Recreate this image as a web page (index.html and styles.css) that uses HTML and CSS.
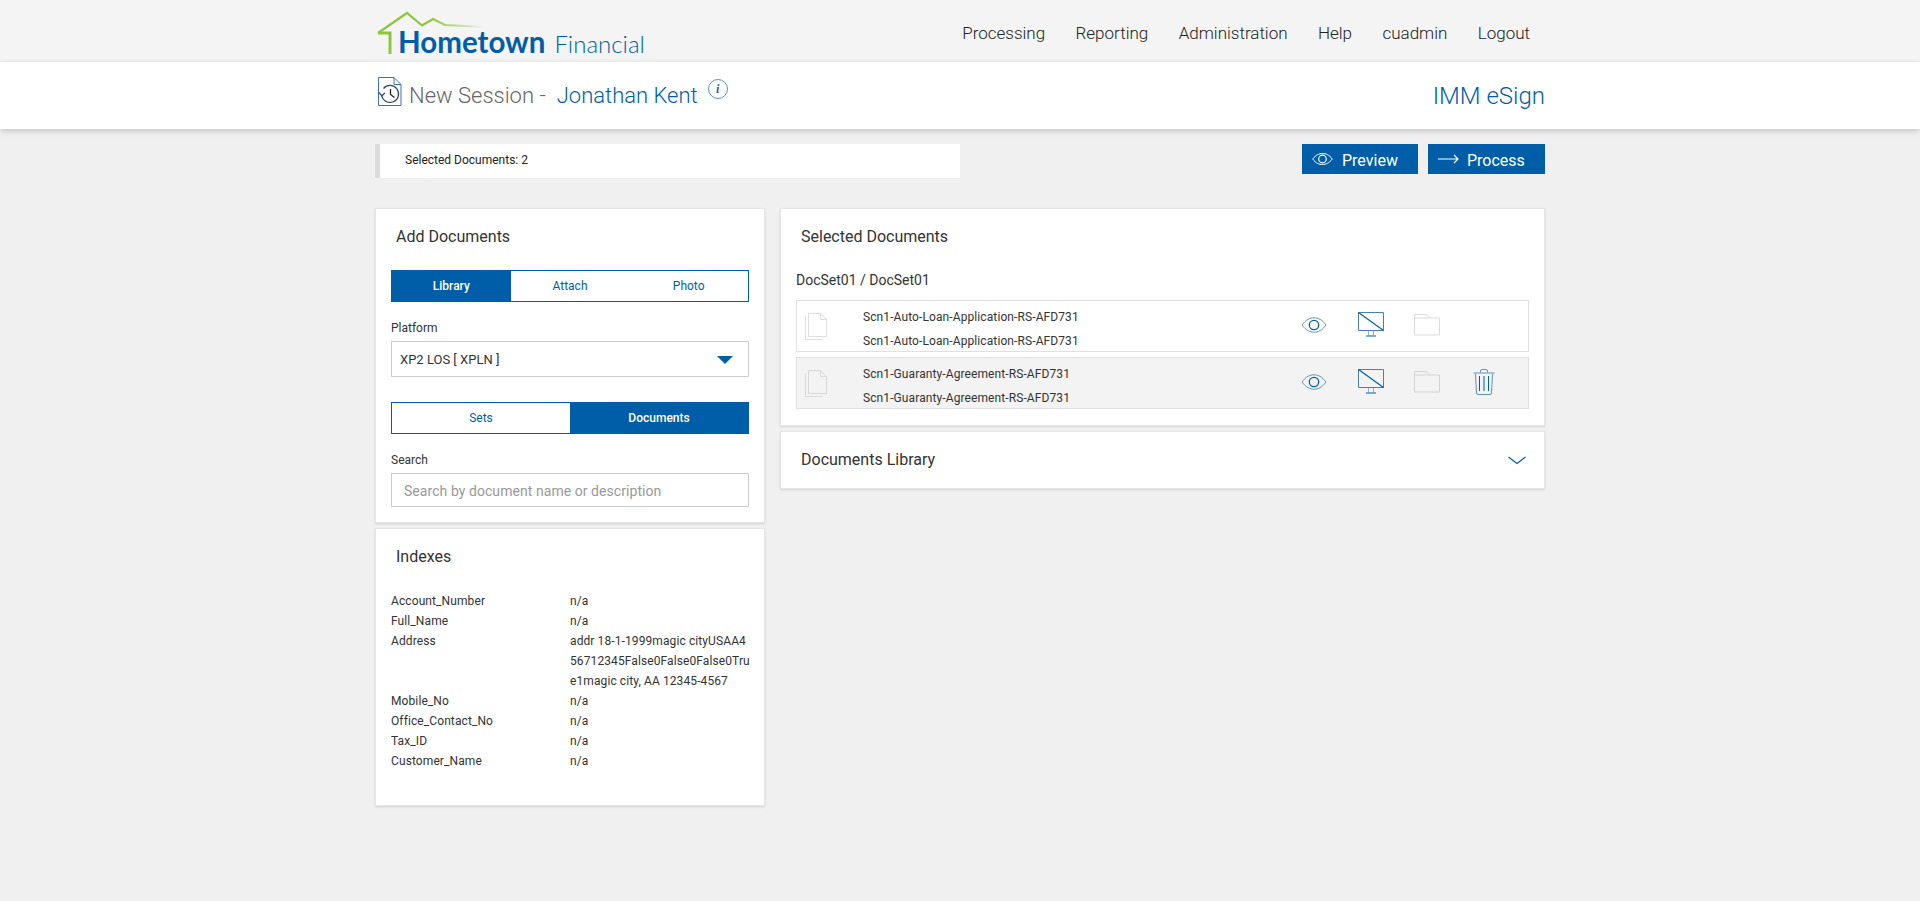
FILE: index.html
```html
<!DOCTYPE html>
<html lang="en">
<head>
<meta charset="utf-8">
<title>IMM eSign</title>
<link rel="stylesheet" href="styles.css">
</head>
<body>
<header class="topbar">
  <div class="wrap topbar-in">
    <a class="logo">
      <svg class="logo-roof" width="120" height="44" viewBox="0 0 120 44">
        <defs><linearGradient id="roofFade" x1="0" x2="1" y1="0" y2="0"><stop offset="0.5" stop-color="#8cc63f"/><stop offset="1" stop-color="#8cc63f" stop-opacity="0"/></linearGradient></defs>
        <path d="M1 22 L30 2 L45 14.500 L56 8 L68 14 L108 16" fill="none" stroke="url(#roofFade)" stroke-width="2.200"/>
        <path d="M1 22 H13 V43" fill="none" stroke="#8cc63f" stroke-width="3"/>
      </svg>
      <span class="logo-home">Hometown</span><span class="logo-fin">Financial</span>
    </a>
    <nav class="nav">
      <a>Processing</a><a>Reporting</a><a>Administration</a><a>Help</a><a>cuadmin</a><a>Logout</a>
    </nav>
  </div>
</header>

<section class="subhead">
  <div class="wrap subhead-in">
    <div class="session">
      <svg class="session-icon" width="24" height="30" viewBox="0 0 24 30" fill="none" stroke="#3f6fb5">
        <path d="M0.500 0.500 H16 L23 7.500 V28.500 H0.500 Z M16 0.500 V7.500 H23"/>
        <path d="M5.500 11.500 A8.500 8.500 0 1 1 3.700 18.500" stroke="#2b4a66" stroke-width="1.200"/>
        <path d="M1 15.500 L3.800 18.800 L7 16" stroke="#2b4a66" stroke-width="1.200"/>
        <path d="M12.500 12 V17.500 L16.500 20.500" stroke="#222" stroke-width="1.300"/>
      </svg>
      <span class="session-label">New Session -</span>
      <span class="session-name">Jonathan Kent</span>
      <span class="info">i</span>
    </div>
    <div class="product">IMM eSign</div>
  </div>
</section>

<main class="wrap">
  <div class="actions">
    <div class="notice">Selected Documents: 2</div>
    <div class="buttons">
      <button class="btn btn-preview">
        <svg width="21" height="12" viewBox="0 0 21 12" fill="none" stroke="#fff"><path d="M0.700 6 C4 1.800 7 0.500 10.500 0.500 C14 0.500 17 1.800 20.300 6 C17 10.200 14 11.500 10.500 11.500 C7 11.500 4 10.200 0.700 6 Z"/><circle cx="10.500" cy="6" r="3.800" stroke-width="1.200"/></svg>
        <span>Preview</span>
      </button>
      <button class="btn btn-process">
        <svg width="21" height="10" viewBox="0 0 21 10" fill="none" stroke="#fff" stroke-width="1.200"><path d="M0 5 H20 M16 1 L20 5 L16 9"/></svg>
        <span>Process</span>
      </button>
    </div>
  </div>

  <div class="columns">
    <div class="col">
      <section class="panel panel-add">
        <h2 class="panel-title">Add Documents</h2>
        <div class="seg seg-three">
          <span class="seg-item is-on">Library</span><span class="seg-item">Attach</span><span class="seg-item">Photo</span>
        </div>
        <label class="field-label">Platform</label>
        <div class="select">XP2 LOS [ XPLN ]<span class="caret"></span></div>
        <div class="seg seg-two">
          <span class="seg-item">Sets</span><span class="seg-item is-on">Documents</span>
        </div>
        <label class="field-label">Search</label>
        <input class="search" type="text" placeholder="Search by document name or description">
      </section>

      <section class="panel panel-index">
        <h2 class="panel-title">Indexes</h2>
        <dl class="index-list">
          <dt>Account_Number</dt><dd>n/a</dd>
          <dt>Full_Name</dt><dd>n/a</dd>
          <dt>Address</dt><dd>addr 18-1-1999magic cityUSAA456712345False0False0False0True1magic city, AA 12345-4567</dd>
          <dt>Mobile_No</dt><dd>n/a</dd>
          <dt>Office_Contact_No</dt><dd>n/a</dd>
          <dt>Tax_ID</dt><dd>n/a</dd>
          <dt>Customer_Name</dt><dd>n/a</dd>
        </dl>
      </section>
    </div>

    <div class="col">
      <section class="panel panel-selected">
        <h2 class="panel-title">Selected Documents</h2>
        <div class="docset">DocSet01 / DocSet01</div>
        <div class="doc">
          <svg class="doc-icon" width="22" height="27" viewBox="0 0 22 27" fill="none" stroke="#dedede"><path d="M0.500 3.500 V26.500 H17.500"/><path d="M3.500 0.500 H15.500 L21.500 6.500 V23.500 H3.500 Z M15.500 0.500 V6.500 H21.500"/></svg>
          <div class="doc-text"><div>Scn1-Auto-Loan-Application-RS-AFD731</div><div>Scn1-Auto-Loan-Application-RS-AFD731</div></div>
          <div class="doc-actions">
            <svg class="ico-eye" width="26" height="16" viewBox="0 0 26 16" fill="none" stroke="#005ea8"><path d="M1 8 C5 2.500 9 0.800 13 0.800 C17 0.800 21 2.500 25 8 C21 13.500 17 15.200 13 15.200 C9 15.200 5 13.500 1 8 Z" stroke="#5c93bf"/><circle cx="13" cy="8" r="4.700" stroke-width="1.300"/></svg>
            <svg class="ico-mon" width="26" height="25" viewBox="0 0 26 25" fill="none"><path d="M0.500 0.500 H25.500 V18.500 H0.500 Z" stroke="#4a7fb5"/><path d="M0.500 0.500 L25.500 18.500" stroke="#005ea8" stroke-width="1.200"/><path d="M10.500 19 V23.500 M15.500 19 V23.500" stroke="#9ab3bf"/><path d="M8 24 H18" stroke="#005ea8"/></svg>
            <svg class="ico-folder" width="26" height="22" viewBox="0 0 26 22" fill="none" stroke="#dcdcdc"><path d="M0.500 21 V0.500 H12 L16 4 H25.500 V21 Z M0.500 4 H16"/></svg>
          </div>
        </div>
        <div class="doc doc-alt">
          <svg class="doc-icon" width="22" height="27" viewBox="0 0 22 27" fill="none" stroke="#d8d8d8"><path d="M0.500 3.500 V26.500 H17.500"/><path d="M3.500 0.500 H15.500 L21.500 6.500 V23.500 H3.500 Z M15.500 0.500 V6.500 H21.500"/></svg>
          <div class="doc-text"><div>Scn1-Guaranty-Agreement-RS-AFD731</div><div>Scn1-Guaranty-Agreement-RS-AFD731</div></div>
          <div class="doc-actions">
            <svg class="ico-eye" width="26" height="16" viewBox="0 0 26 16" fill="none" stroke="#005ea8"><path d="M1 8 C5 2.500 9 0.800 13 0.800 C17 0.800 21 2.500 25 8 C21 13.500 17 15.200 13 15.200 C9 15.200 5 13.500 1 8 Z" stroke="#5c93bf"/><circle cx="13" cy="8" r="4.700" stroke-width="1.300"/></svg>
            <svg class="ico-mon" width="26" height="25" viewBox="0 0 26 25" fill="none"><path d="M0.500 0.500 H25.500 V18.500 H0.500 Z" stroke="#4a7fb5"/><path d="M0.500 0.500 L25.500 18.500" stroke="#005ea8" stroke-width="1.200"/><path d="M10.500 19 V23.500 M15.500 19 V23.500" stroke="#9ab3bf"/><path d="M8 24 H18" stroke="#005ea8"/></svg>
            <svg class="ico-folder" width="26" height="22" viewBox="0 0 26 22" fill="none" stroke="#d4d4d4"><path d="M0.500 21 V0.500 H12 L16 4 H25.500 V21 Z M0.500 4 H16"/></svg>
            <svg class="ico-trash" width="22" height="26" viewBox="0 0 22 26" fill="none" stroke="#5c93bf"><path d="M0.500 4 H21.500"/><path d="M7.500 3.500 V2 Q7.500 0.500 9 0.500 H13 Q14.500 0.500 14.500 2 V3.500"/><path d="M2.500 5 L3.500 24 Q3.600 25.500 5 25.500 H17 Q18.400 25.500 18.500 24 L19.500 5"/><path d="M6.500 7 V22 M11 7 V22 M15.500 7 V22" stroke="#005ea8"/></svg>
          </div>
        </div>
      </section>
      <section class="panel panel-library">
        <h2 class="panel-title">Documents Library</h2>
        <svg class="chev" width="18" height="9" viewBox="0 0 18 9" fill="none" stroke="#005ea8" stroke-width="1.200"><path d="M0.500 1 L9 7.500 L17.500 1"/></svg>
      </section>
    </div>
  </div>
</main>
</body>
</html>
```
FILE: styles.css
```css
* { box-sizing: border-box; }
html, body { margin: 0; padding: 0; }
body {
  min-height: 901px;
  background: #f0f0f0;
  color: #333;
  font-family: Roboto, "Liberation Sans", sans-serif;
  font-size: 12px;
  overflow: hidden;
}
.wrap { width: 1170px; margin: 0 auto; }

.topbar { height: 62px; background: #f4f4f4; }
.topbar-in { display: flex; justify-content: space-between; height: 62px; }
.logo { display: flex; align-items: flex-end; position: relative; height: 62px; padding-left: 23px; padding-bottom: 2px; color: #005ea8; white-space: nowrap; }
.logo-roof { position: absolute; left: 2px; top: 11px; }
.logo-home { font-family: Lato, sans-serif; font-weight: 700; font-size: 29.500px; line-height: 36px; position: relative; }
.logo-fin { font-family: Lato, sans-serif; font-weight: 300; font-size: 24px; line-height: 33px; margin-left: 9px; }
.nav { display: flex; gap: 30.400px; align-items: center; padding-right: 15px; padding-top: 4px; font-size: 17px; font-weight: 300; color: #222; }

.subhead { height: 67px; background: #fff; box-shadow: 0 2px 6px rgba(0,0,0,.18); position: relative; }
.subhead-in { display: flex; justify-content: space-between; align-items: flex-start; }
.session { display: flex; align-items: flex-start; font-size: 22px; font-weight: 300; line-height: 30px; padding-top: 19px; }
.session-icon { margin: -4px 7px 0 3px; }
.session-label { color: #666; }
.session-name { color: #005ea8; margin-left: 11px; }
.info { width: 20px; height: 20px; border: 1px solid #5c93bf; border-radius: 50%; margin: -2px 0 0 10px; font: italic 700 12px/18px "Liberation Serif", serif; color: #1d5f96; text-align: center; }
.product { font-size: 24px; font-weight: 300; color: #005ea8; line-height: 30px; padding-top: 19px; }

.actions { display: flex; justify-content: space-between; align-items: flex-start; padding-top: 15px; height: 79px; }
.notice { width: 585px; height: 34px; background: #fff; border-left: 5px solid #ddd; padding-left: 25px; line-height: 33px; color: #222; }
.buttons { display: flex; gap: 10px; }
.btn { display: flex; align-items: center; height: 30px; background: #005ea8; color: #fff; border: 0; padding: 0; font-family: Roboto, sans-serif; font-size: 16px; font-weight: 400; }
.btn svg { margin: 0 9px 0 10px; flex: none; }
.btn-process svg { margin-right: 8px; }
.btn span { padding-top: 3px; }
.btn-preview { width: 116px; }
.btn-process { width: 117px; }

.columns { display: grid; grid-template-columns: 390px 765px; column-gap: 15px; align-items: start; }
.col { display: flex; flex-direction: column; gap: 5px; }
.panel { background: #fff; border: 1px solid #e6e6e6; box-shadow: 0 1px 2px rgba(0,0,0,.12); padding: 0 15px; }
.panel-title { margin: 0; font-size: 16px; font-weight: 400; line-height: 20px; padding: 18px 0 0 5px; color: #333; }
.panel-add { height: 315px; }
.panel-index { height: 278px; }
.panel-selected { height: 218px; }
.panel-library { height: 58px; position: relative; }
.chev { position: absolute; right: 18px; top: 24px; }

.seg { display: flex; height: 32px; border: 1px solid #005ea8; }
.seg-item { flex: 1; display: flex; align-items: center; justify-content: center; color: #005ea8; font-size: 12px; }
.seg-item.is-on { background: #005ea8; color: #fff; font-weight: 500; }
.seg-three { margin-top: 23px; }
.seg-two { margin-top: 25px; }
.seg-two .seg-item:first-child { flex: 0 0 178px; }
.field-label { display: block; font-size: 12px; line-height: 16px; margin-top: 18px; color: #333; }
.select { position: relative; height: 36px; margin-top: 5px; border: 1px solid #ccc; padding-left: 8px; line-height: 36px; font-size: 13px; color: #333; }
.caret { position: absolute; right: 15px; top: 14px; border: 8px solid transparent; border-top: 8px solid #005ea8; border-bottom: 0; }
.search { display: block; width: 100%; height: 34px; margin-top: 5px; border: 1px solid #ccc; padding: 1px 12px 0; font-family: Roboto, sans-serif; font-size: 14px; letter-spacing: .06px; outline: 0; }
.search::placeholder { color: #999; opacity: 1; }

.index-list { display: grid; grid-template-columns: 179px 180px; margin: 0; padding-top: 24px; line-height: 20px; letter-spacing: .1px; color: #333; }
.index-list dt { font-weight: 400; }
.index-list dd { margin: 0; word-break: break-all; }

.docset { font-size: 14px; line-height: 20px; margin-top: 23px; color: #333; }
.doc { display: flex; align-items: center; height: 52px; margin-top: 5px; border: 1px solid #e0e0e0; }
.docset + .doc { margin-top: 10px; }
.doc-alt { background: #f3f3f3; }
.doc-icon { margin-left: 8px; flex: none; }
.doc-text { width: 438px; margin-left: 36px; align-self: flex-start; padding-top: 4px; line-height: 24px; letter-spacing: .1px; color: #333; }
.doc-actions { display: flex; align-items: center; margin-top: -3px; }
.ico-eye { flex: none; margin-right: 31px; }
.ico-mon { flex: none; margin-right: 30px; }
.ico-folder { flex: none; margin-right: 33px; }
.ico-trash { flex: none; }
```
